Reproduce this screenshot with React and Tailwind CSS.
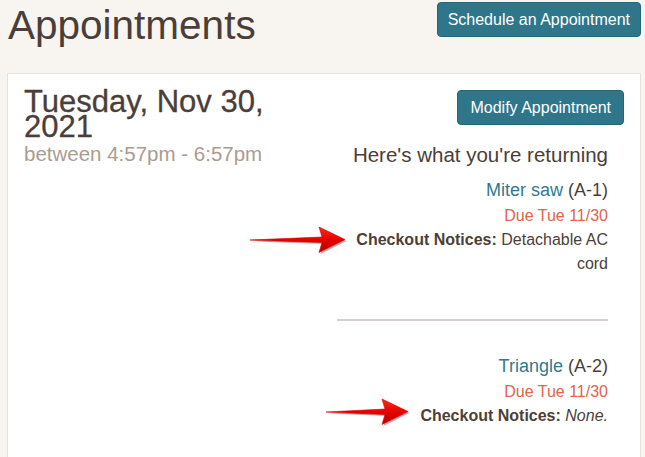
import React from 'react';

function Arrow({ className, length }) {
  const L = length;
  return (
    <svg
      className={className}
      width={L + 4}
      height={30}
      viewBox={`0 0 ${L + 4} 30`}
    >
      <defs>
        <linearGradient id={`g${L}`} x1="0" y1="0" x2="0" y2="1">
          <stop offset="0" stopColor="#ff2a1a" />
          <stop offset="0.5" stopColor="#e60000" />
          <stop offset="1" stopColor="#b80000" />
        </linearGradient>
      </defs>
      <path
        d={`M1,15 L${L - 23},12 L${L - 26},2 L${L},14.5 L${L - 26},27.5 L${L - 23},17.5 Z`}
        fill="#7a0000"
        opacity="0.35"
        transform="translate(1.5,1.5)"
      />
      <path
        d={`M1,15 L${L - 23},12 L${L - 26},2 L${L},14.5 L${L - 26},27.5 L${L - 23},17.5 Z`}
        fill={`url(#g${L})`}
        stroke="#d00000"
        strokeWidth="0.6"
        strokeLinejoin="round"
      />
    </svg>
  );
}

function ReturnItem({ name, code, due, notice, italic }) {
  return (
    <div className="pb-[11px] text-right text-[16px] leading-[24px]">
      <div className="text-[18px] leading-[27px]">
        <span className="text-[#2f7a90]">{name}</span>{' '}
        <span className="text-[#4d3f38]">({code})</span>
      </div>
      <div className="text-[#e0644e]">{due}</div>
      <div className="text-[#4d3f38]">
        <span className="font-bold">Checkout Notices:</span>{' '}
        {italic ? <em>{notice}</em> : notice}
      </div>
    </div>
  );
}

export default function App() {
  return (
    <div
      className="relative min-h-[457px] bg-[#f8f5f0] pl-[7px] pr-[4px] text-[#4d3f38]"
      style={{ fontFamily: '"Liberation Sans", Arial, sans-serif' }}
    >
      <div className="flex items-start justify-between">
        <h1 className="pt-[1px] pl-[1px] text-[40.5px] leading-[48px] text-[#4b3e38]">
          Appointments
        </h1>
        <button className="mt-[2px] h-[35px] rounded-[4px] border border-[#266577] bg-[#2f768b] px-[10px] text-[16px] text-white">
          Schedule an Appointment
        </button>
      </div>

      <div className="mt-[24px] border border-[#e7e2dc] bg-white p-4 pb-8">
        <div className="flex">
          <div className="flex-1">
            <h2 className="-mt-[1px] text-[31px] leading-[25px] text-[#4b3e38] [-webkit-text-stroke:0.3px_#4b3e38]">
              Tuesday, Nov 30, 2021
            </h2>
            <div className="text-[20.5px] leading-[30px] text-[#ab9c90]">
              between 4:57pm - 6:57pm
            </div>
          </div>
          <div className="w-[303px]">
            <div className="flex justify-end">
              <button className="h-[35px] rounded-[4px] border border-[#266577] bg-[#2f768b] px-3 text-[16px] text-white">
                Modify Appointment
              </button>
            </div>
            <div className="px-4">
              <h3 className="mt-[18px] mb-[10px] text-right text-[20.5px] leading-[24px] text-[#4b3e38]">
                Here's what you're returning
              </h3>
              <ReturnItem
                name="Miter saw"
                code="A-1"
                due="Due Tue 11/30"
                notice="Detachable AC cord"
              />
              <hr className="my-8 border-0 border-t-2 border-[#d9cfc9]" />
              <ReturnItem
                name="Triangle"
                code="A-2"
                due="Due Tue 11/30"
                notice="None."
                italic
              />
            </div>
          </div>
        </div>
      </div>

      <Arrow className="absolute left-[249px] top-[225px]" length={96} />
      <Arrow className="absolute left-[325px] top-[397px]" length={83} />
    </div>
  );
}
